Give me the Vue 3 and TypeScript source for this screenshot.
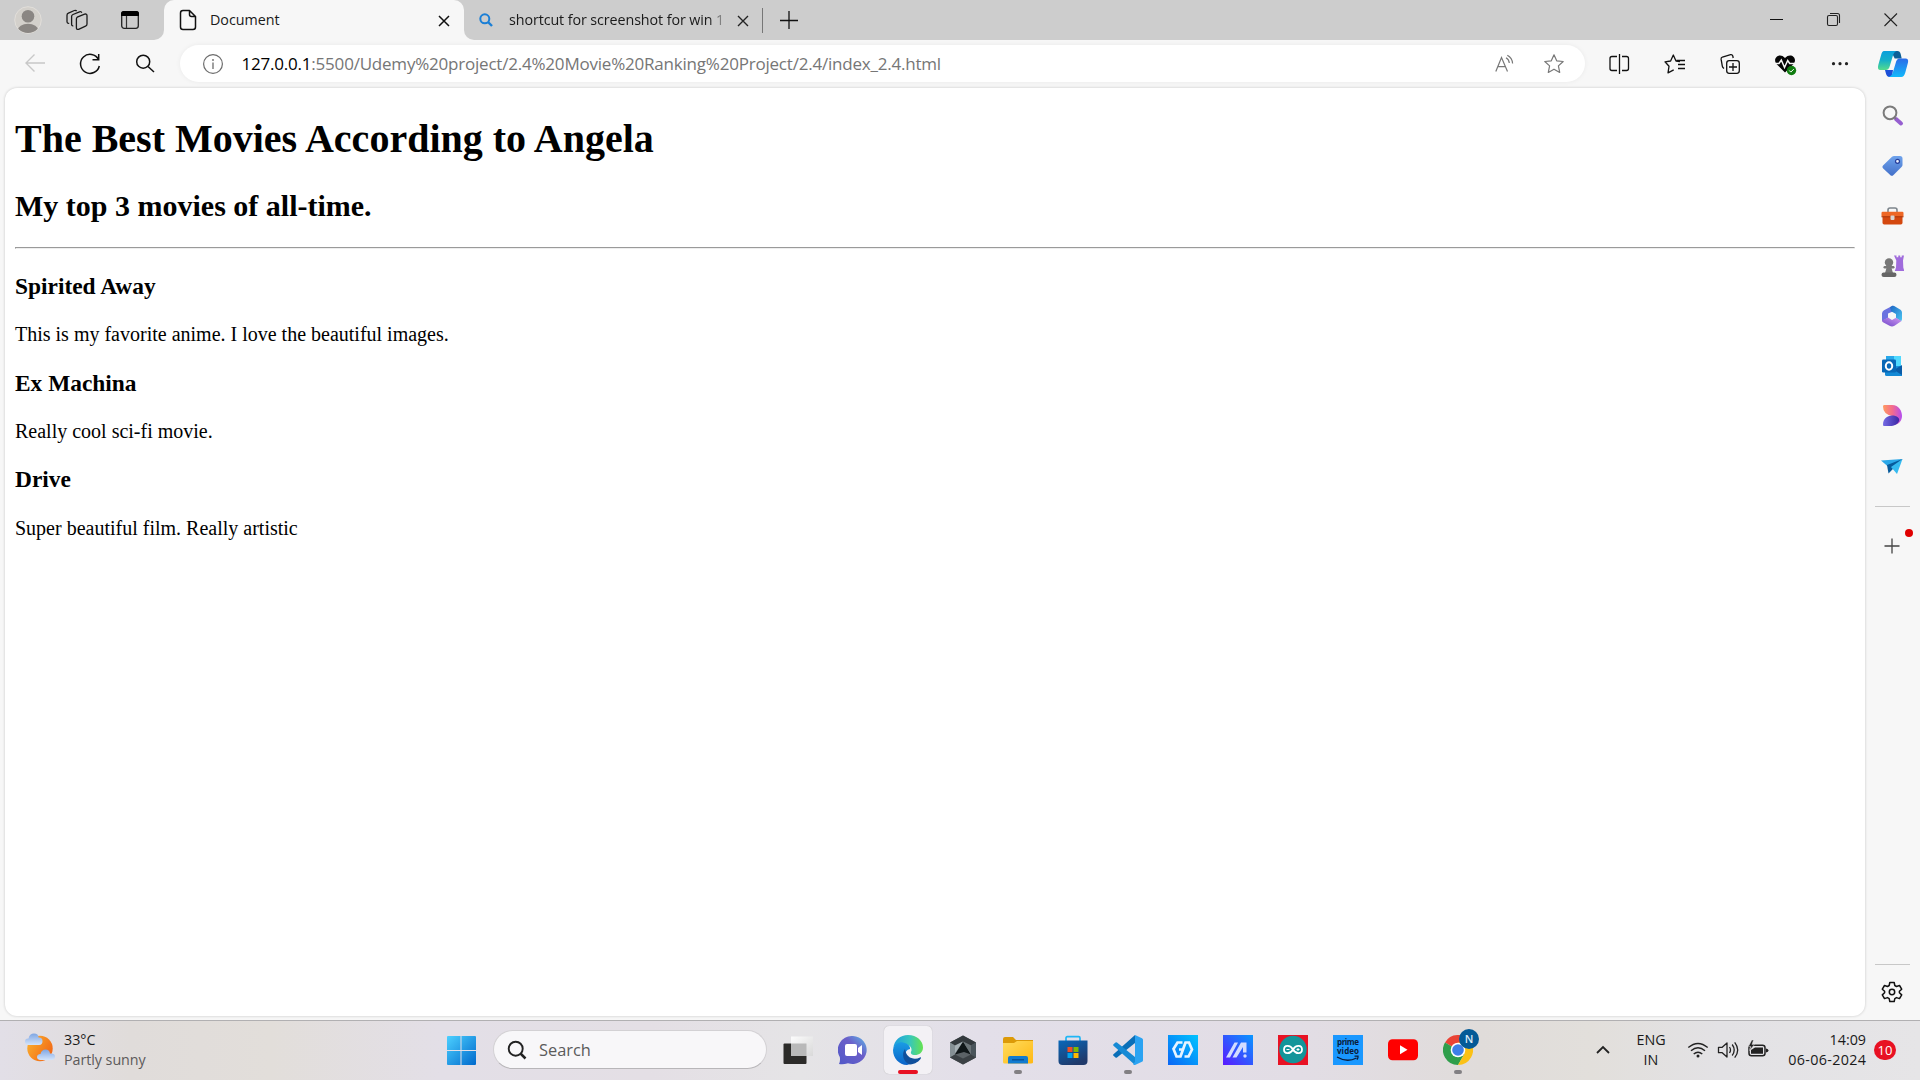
<script setup lang="ts">
interface Movie {
  title: string
  review: string
}

const movies: Movie[] = [
  { title: 'Spirited Away', review: 'This is my favorite anime. I love the beautiful images.' },
  { title: 'Ex Machina', review: 'Really cool sci-fi movie.' },
  { title: 'Drive', review: 'Super beautiful film. Really artistic' },
]
</script>

<template>
  <div class="desktop">
    <header class="tabstrip">
      <div class="strip-left">
        <svg class="ic-avatar" width="28" height="28" viewBox="0 0 28 28">
          <defs><clipPath id="av"><circle cx="14" cy="14" r="13" /></clipPath></defs>
          <circle cx="14" cy="14" r="13.3" fill="#d3d0cb" stroke="#e3e0db" stroke-width=".9" />
          <g clip-path="url(#av)" fill="#8a8683"><circle cx="14" cy="10.3" r="6.3" /><ellipse cx="14" cy="24.3" rx="10.3" ry="6.6" /></g>
        </svg>
        <svg class="ic-spaces" width="24" height="24" viewBox="0 0 24 24" fill="none" stroke="#1b1b1b" stroke-width="1.3" stroke-linejoin="round">
          <path d="M12.2 9.2 19.6 6.2q2.4-.8 2.4 1.6v8.2q0 1.500-1.500 2.200L13.600 21.300q-2.200.700-2.200-1.500v-8.800q0-1.200.8-1.800z" />
          <path d="M8.300 17.800q-1.700.3-1.700-1.600V8.600q0-1.500 1.400-2.100l6.500-2.700q1.800-.6 2.300.9" />
          <path d="M4.200 15.300q-2.200.2-2.200-1.700V7.200q0-1.500 1.400-2.100l6-2.600q1.600-.5 2.200.6" />
        </svg>
        <svg class="ic-vtabs" width="20" height="20" viewBox="0 0 20 20">
          <rect x="1.7" y="1.700" width="16.600" height="16.600" rx="2.500" fill="none" stroke="#222" stroke-width="1.300" />
          <path d="M1 6V3.500Q1 1 3.500 1h13Q19 1 19 3.500V6z" fill="#000" /><path d="M6.500 6v12" stroke="#333" stroke-width="1.200" />
        </svg>
      </div>
      <div class="tab-back">
        <div class="tab active">
          <svg class="ic-doc" width="18" height="22" viewBox="0 0 18 22" fill="none" stroke="#111" stroke-width="1.500" stroke-linejoin="round">
            <path d="M10.500 1.500H4Q1.500 1.500 1.500 4v14Q1.500 20.500 4 20.500h10q2.500 0 2.500-2.500V7.500zM10.500 1.500V5.500q0 2 2 2h4" />
          </svg>
          <span class="tab-name">Document</span>
          <svg class="x" width="12" height="12" viewBox="0 0 12 12"><path d="m1 1 10 10M11 1 1 11" stroke="#111" stroke-width="1.500" /></svg>
        </div>
      </div>
      <div class="strip-right">
        <svg class="ic-find" width="14" height="14" viewBox="0 0 14 14" fill="none" stroke="#1b7fd6" stroke-width="2"><circle cx="5.800" cy="5.800" r="4.500" /><path d="m9 9 4 4" stroke-width="2.400" /></svg>
        <span class="tab-name second">shortcut for screenshot for win 11</span>
        <svg class="x2" width="12" height="12" viewBox="0 0 12 12"><path d="m1 1 10 10M11 1 1 11" stroke="#222" stroke-width="1.400" /></svg>
        <i class="divider"></i>
        <svg class="newtab" width="18" height="18" viewBox="0 0 18 18"><path d="M9 0v18M0 9.500h18" stroke="#111" stroke-width="1.300" /></svg>
        <div class="controls">
          <svg width="57" height="40" viewBox="0 0 57 40"><path d="M22 19.500h13" stroke="#111" /></svg>
          <svg width="57" height="40" viewBox="0 0 57 40" fill="none" stroke="#222" stroke-width="1.100"><rect x="22.500" y="15.500" width="10" height="10" rx="1.500" /><path d="M25 13.500h7.500q2 0 2 2V23" /></svg>
          <svg width="58" height="40" viewBox="0 0 58 40"><path d="m22.500 13.500 12.500 12.500M35 13.500 22.500 26" stroke="#222" stroke-width="1.100" /></svg>
        </div>
      </div>
    </header>

    <div class="toolbar">
      <svg width="55" height="48" viewBox="7 40 55 48" fill="none" stroke="#c8c8c8" stroke-width="1.400"><path d="M45 63H26M34.500 54.500 26 63l8.500 8.500" /></svg>
      <svg width="55" height="48" viewBox="62 40 55 48" fill="none" stroke="#111" stroke-width="1.500"><path d="M98.500 59.500A9.500 9.500 0 1 0 99.300 66M98.700 54v5.700H92.500" /></svg>
      <svg width="56" height="48" viewBox="117 40 56 48" fill="none" stroke="#111" stroke-width="1.500"><circle cx="143.200" cy="61.700" r="6.500" /><path d="m148 66.500 6 5.500" /></svg>
      <div class="address">
        <svg class="ic-info" width="22" height="22" viewBox="0 0 22 22"><circle cx="11" cy="11" r="9.400" fill="none" stroke="#6c6c6c" stroke-width="1.200" /><path d="M11 9.500v6.500" stroke="#6c6c6c" stroke-width="1.300" /><circle cx="11" cy="7" r=".9" fill="#6c6c6c" /></svg>
        <span class="url"><b>127.0.0.1</b>:5500/Udemy%20project/2.4%20Movie%20Ranking%20Project/2.4/index_2.4.html</span>
        <svg class="ic-read" width="20" height="20" viewBox="0 0 20 20" fill="none" stroke="#777" stroke-width="1.200"><path d="m.8 17.500L6.500 3.500l6 14M3 12.700h7.400M11 3.700q3 1.600 3.300 5.300M12.300 1.200q5 2.600 5.300 8.300" /></svg>
        <svg class="ic-star" width="22" height="22" viewBox="0 0 22 22" fill="none" stroke="#777" stroke-width="1.200" stroke-linejoin="round"><path d="m11 1.800 2.700 6 6.500.7-4.800 4.400 1.300 6.500-5.700-3.200-5.700 3.200 1.300-6.500-4.800-4.400 6.500-.7z" /></svg>
      </div>
      <div class="actions">
        <svg viewBox="1592 40 55 48" fill="none" stroke="#111" stroke-width="1.300"><path d="M1617 56.500h-5q-2 0-2 2v10q0 2 2 2h5M1622 56.500h4.500q2 0 2 2v10q0 2-2 2h-4.500M1619.500 54v20" /></svg>
        <svg viewBox="1647 40 55 48" fill="none" stroke="#111" stroke-width="1.300" stroke-linejoin="round"><path d="M1680 61.500l-4-.5-2.700-6-2.700 6-5.600.8 4 4.500-1 6.500 5.700-3M1676.500 60.500h8.500M1678 64.500h7M1678 68.500h7" /></svg>
        <svg viewBox="1702 40 55 48" fill="none" stroke="#111" stroke-width="1.300"><rect x="1726.700" y="60.700" width="12.600" height="12.600" rx="2.500" /><path d="M1733 63v8M1729 67h8M1724 68.500q-1.500-1-1.700-2.300l-1.200-7q-.2-1.700 1.300-2.200l8.200-2.300q1.700-.3 2.200 1.300l.4 2" /></svg>
        <svg viewBox="1757 40 55 48"><path d="M1785 72.500l-8.300-8.300c-5-6 3-12.500 8.300-6.200 5.500-6.300 13.500.2 8.300 6.200z" fill="#050505" /><path d="M1775 63.500h4l2.300-3.500 3.200 7.500 3.200-7 2 3h5.500" fill="none" stroke="#f7f7f7" stroke-width="1.500" /><circle cx="1791.500" cy="70.500" r="4.700" fill="#107c10" /><path d="m1789.300 70.500 1.500 1.600 3-3" fill="none" stroke="#fff" stroke-width="1" /></svg>
        <svg viewBox="1812 40 55 48"><g fill="#222"><circle cx="1833.500" cy="63.700" r="1.600" /><circle cx="1840" cy="63.700" r="1.600" /><circle cx="1846.500" cy="63.700" r="1.600" /></g></svg>
        <svg class="wide" viewBox="1867 40 53 48">
          <defs>
            <linearGradient id="c1" x1="0" y1="0" x2="0" y2="1"><stop offset="0" stop-color="#0a9fdc" /><stop offset=".5" stop-color="#16b0c8" /><stop offset="1" stop-color="#55dc8c" /></linearGradient>
            <linearGradient id="c2" x1="0" y1="0" x2="0" y2="1"><stop offset="0" stop-color="#2a6be8" /><stop offset="1" stop-color="#12b9fb" /></linearGradient>
          </defs>
          <path d="M1891 51h6.500q2.500 0 3.200 3l1 4.500h-7z" fill="#0c5f97" />
          <path d="M1885 70h8l-1 7h-2.500q-2.800 0-3.700-4z" fill="#1c4fd8" />
          <path d="M1884 51h12.500q-2.700 1-3.700 5l-3 10q-1 4-4 4h-5.500q-3.300 0-2-5l2.800-10q1-4 2.900-4z" fill="url(#c1)" />
          <path d="M1899.500 58.500h6q3.300 0 2.500 4l-2.700 10q-1.300 4.500-4 4.500h-12.800q3.500-1 4.500-5l2.700-9q1-4.500 3.800-4.500z" fill="url(#c2)" />
        </svg>
      </div>
    </div>

    <div class="middle">
      <main class="page">
        <h1>The Best Movies According to Angela</h1>
        <h2>My top 3 movies of all-time.</h2>
        <hr>
        <template v-for="m in movies" :key="m.title">
          <h3>{{ m.title }}</h3>
          <p>{{ m.review }}</p>
        </template>
      </main>

      <aside class="sidebar">
        <svg viewBox="0 0 24 24"><circle cx="10" cy="8.800" r="6.400" fill="none" stroke="#7b7b7b" stroke-width="2" /><path d="m16 15 5 4.500" stroke="#965fd0" stroke-width="4" stroke-linecap="round" /><path d="m14 13 2 2" stroke="#777" stroke-width="1.500" /></svg>
        <svg viewBox="0 0 24 24"><defs><linearGradient id="tg" x2="0" y2="1"><stop stop-color="#6fa3ec" /><stop offset="1" stop-color="#4370c9" /></linearGradient></defs><path d="M14 2h6q2.500 0 2.500 2.500V11q0 1-1 2l-8 8q-1.700 1.700-3.300 0l-7-6.500Q1.500 13 3 11.500l9-8.700Q13 2 14 2z" fill="url(#tg)" /><circle cx="17.500" cy="7.300" r="2" fill="#e8f0ff" stroke="#273f9b" stroke-width="1.200" /></svg>
        <svg viewBox="0 -1.500 24 24"><path d="M8 7V4.500q0-2 2-2h5q2 0 2 2V7" fill="none" stroke="#7d858c" stroke-width="1.600" /><rect x="2.500" y="7" width="20" height="12" rx="1.700" fill="#d4480f" /><path d="M1.500 7.500q0-1.200 1.200-1.200h19.600q1.200 0 1.200 1.200V11h-22z" fill="#ee6725" /><path d="M1.500 11.300h22" stroke="#a8360c" /><rect x="10.500" y="10" width="4" height="4.500" rx="1" fill="#d9d5d2" /></svg>
        <svg viewBox="0 0 24 24"><path d="M14 1.500h2.500v1.800h1.800V1.500h1.900v1.800h1.500V1.500H24l-1 5 .3 7 1 3.500h-9.500l1.200-3.500.3-7z" fill="#a06cdc" /><g fill="#777"><circle cx="9" cy="8.500" r="4.200" /><rect x="3.500" y="12" width="11" height="2.500" rx="1.200" /><path d="M6.500 14h5l1.500 5H5z" /><rect x="1.500" y="18.500" width="15" height="4.500" rx="2.200" fill="#666" /></g></svg>
        <svg viewBox="0 0 24 24">
          <defs><linearGradient id="mm" x1="0" y1="1" x2="1" y2="0"><stop stop-color="#6f47c9" /><stop offset="1" stop-color="#d29af2" /></linearGradient><linearGradient id="mn" x2="1" y2="1"><stop stop-color="#1c66c4" /><stop offset="1" stop-color="#4cc6f2" /></linearGradient></defs>
          <path d="M13 1.500 4 6.300Q2 7.500 2 9.500v7.700l6-3.400V9.500l6-2.500z" fill="#6a72e0" />
          <path d="M10 3.200 12 2q1-.6 2.200 0l6.300 3.700Q22 6.600 22 8.500v6.500q0 1.500-1 2.200l-5-3.300V10l-5-2.800z" fill="url(#mn)" />
          <path d="m2 16.500 6-3 4 2.500 4-2.200 5.500 3.200-7 4.700q-2.500 1.500-5 0L3 18.200Q2 17.500 2 16.500z" fill="url(#mm)" />
        </svg>
        <svg viewBox="0 0 24 24"><path d="M6 2h15v16H6z" fill="#28a8ea" /><path d="M14 2h7v10h-7z" fill="#50d9ff" /><path d="M5 13 22 12v10H6.500Q5 22 5 20.500z" fill="#1489d5" /><path d="m14 16 8-5v10z" fill="#0a5ca8" /><rect x="2" y="5.500" width="14" height="13" rx="1.200" fill="#0868b7" /><ellipse cx="9" cy="12" rx="3.200" ry="3.700" fill="none" stroke="#fff" stroke-width="2" /></svg>
        <svg viewBox="0 0 24 24"><defs><linearGradient id="d1"><stop stop-color="#ff9b60" /><stop offset=".5" stop-color="#f36b8d" /><stop offset="1" stop-color="#b44cf0" /></linearGradient><linearGradient id="d2" x2="1" y2="0"><stop stop-color="#746ae4" /><stop offset="1" stop-color="#3b27a4" /></linearGradient></defs><path d="M4 1h8c7 0 10 6 10 11s-4 8.500-7 8.500L12 12Q3 10 3 2.500 3 1 4 1z" fill="url(#d1)" /><path d="M4 22q-1 0-1-1.500C3 15 7 11.500 12 11.500s8 2.500 7 5.500-5 5-9 5z" fill="url(#d2)" /></svg>
        <svg viewBox="0 0 24 24"><path d="M1 6.500 22.500 5l-14 8z" fill="#2aa7e8" /><path d="m7 11 15.500-6-14 14.500z" fill="#075a9b" /><path d="M11 13 22.500 5 17 20z" fill="#35baf0" /></svg>
        <i class="rule"></i>
        <div class="add"><svg viewBox="0 0 24 24"><path d="M12 4.500v15M4.500 12h15" stroke="#444" stroke-width="1.300" /></svg><span class="dot"></span></div>
        <i class="rule bottom"></i>
        <svg class="gear" viewBox="0 0 24 24" fill="none" stroke="#111" stroke-width="1.500" stroke-linejoin="round"><circle cx="12" cy="12" r="2.700" /><path d="m9.800 2.500 4.400 0 .6 3 1.700 1 3-1 2.200 3.700-2.300 2.100v1.500l2.300 2.100-2.200 3.700-3-1-1.700 1-.6 3H9.800l-.6-3-1.700-1-3 1-2.200-3.700 2.300-2.100v-1.500L2.300 9.200l2.200-3.700 3 1 1.700-1z" /></svg>
      </aside>
    </div>

    <footer class="taskbar">
      <div class="weather">
        <svg width="32" height="32" viewBox="0 0 32 32">
          <defs><linearGradient id="sun" x2="1" y2=".6"><stop stop-color="#fbb530" /><stop offset="1" stop-color="#f26a17" /></linearGradient><linearGradient id="cl" x2="0" y2="1"><stop stop-color="#7fa6e3" /><stop offset="1" stop-color="#d3e4fb" /></linearGradient></defs>
          <circle cx="16" cy="16.500" r="12.700" fill="url(#sun)" />
          <path d="M4.500 13q-3.500-.3-3.500-3.500T4.500 6.500Q5.500 1.500 10 1.500T14.500 5.500q4-.3 4 3.700 0 3.500-3.500 3.800z" fill="url(#cl)" />
          <path d="M16.500 28q-3.500-.3-3.500-3t3.500-3Q17.500 17.500 21.500 17.500t4.500 4q5-.3 5 3T27.500 28z" fill="url(#cl)" />
        </svg>
        <div class="lines"><span class="temp">33°C</span><span class="cond">Partly sunny</span></div>
      </div>

      <div class="pins">
        <svg class="start" width="30" height="30" viewBox="0 0 30 30"><defs><linearGradient id="w" x2="1" y2="1"><stop stop-color="#4cd0ff" /><stop offset="1" stop-color="#0069cc" /></linearGradient></defs><path d="M1 2q0-1 1-1h12.500v14H1zM15.500 1h13.500q1 0 1 1v13H15.500zM1 16h13.500v14H2q-1 0-1-1zM15.500 16h14.500v13q0 1-1 1H15.500z" fill="url(#w)" /></svg>
        <div class="search">
          <svg width="20" height="20" viewBox="0 0 20 20" fill="none" stroke="#222" stroke-width="1.900"><circle cx="8.700" cy="8.700" r="7" /><path d="m13.500 13.500 5 5" stroke-width="2.500" /></svg>
          <span>Search</span>
        </div>
        <div class="apps">
          <div class="app"><svg viewBox="0 0 30 30"><defs><linearGradient id="tv" x2="1" y2="1"><stop stop-color="#fcfcfc" /><stop offset="1" stop-color="#d9d9d9" /></linearGradient></defs><rect x=".5" y="8.500" width="23" height="20.500" rx="1" fill="#2c2b29" /><path d="M8 1.500h22V21H8z" fill="url(#tv)" /><path d="M8 8.500h15.500V21H8z" fill="#b9b9b9" /></svg></div>
          <div class="app"><svg viewBox="0 0 30 30"><defs><linearGradient id="ch" x1="0" y1="1" x2="1" y2="0"><stop stop-color="#5058c8" /><stop offset=".6" stop-color="#6b5fc9" /><stop offset="1" stop-color="#5db9e8" /></linearGradient></defs><path d="M15 1a14 14 0 1 1-5 27.200Q5 30 1 29q1.500-3 .8-7A14 14 0 0 1 15 1z" fill="url(#ch)" /><rect x="7" y="9" width="12" height="12" rx="2" fill="#fff" /><path d="M20 13l4-3v10l-4-3z" fill="#fff" /></svg></div>
          <div class="app current">
            <svg viewBox="0 0 30 30"><defs><linearGradient id="e1"><stop stop-color="#1c9de0" /><stop offset=".55" stop-color="#36c6bd" /><stop offset="1" stop-color="#66e34f" /></linearGradient><linearGradient id="e2" x2="0" y2="1"><stop stop-color="#1a9ce4" /><stop offset="1" stop-color="#0b63c9" /></linearGradient></defs>
              <path d="M15 0c9 0 15 6 15 12.500 0 5-4 7.500-8 7.500-3.500 0-4.500-1.500-4-3 1.200-2 .5-5-2-6.500C10 7 2 9 .3 13.500 1 5 7.500 0 15 0z" fill="url(#e1)" />
              <path d="M0 15C1 9 6 6.800 10 7.500c5 .7 7.500 4 7 6.500-7 1-6 11 3 12.500Q17 30 14 30C6 30 0 23 0 15z" fill="url(#e2)" />
              <path d="M12 14c-4 5-1.500 13.500 5 15.500 5-.3 9.500-3.200 11-6.500q.2-1-1-.5c-6 3-14 .5-15-8.500z" fill="#10509c" />
            </svg><i class="mark red"></i>
          </div>
          <div class="app"><svg viewBox="0 0 30 30"><path d="m15 .500 13 7v15l-13 7-13-7v-15z" fill="#5b6266" /><path d="m15 .500 13 7-5 3-8-4-8 4-5-3z" fill="#33393d" /><path d="m2 7.500 5 3v9l-5 3z" fill="#859095" /><path d="m28 7.500-5 3v9l5 3z" fill="#4a555b" /><path d="m7 19.500 8 4 8-4 5 3-13 7-13-7z" fill="#3b4145" /><path d="m15 6.500 8 13-7-2.500-9 2.500z" fill="#101719" /><path d="m7 10.500 8-4-8 12z" fill="#a5afb4" /><path d="m15 6.500 8 4v9z" fill="#6b7478" /></svg></div>
          <div class="app"><svg viewBox="0 0 30 30"><defs><linearGradient id="fo" x2="1" y2="1"><stop stop-color="#ffdc5e" /><stop offset="1" stop-color="#ffb813" /></linearGradient></defs><path d="M0 4q0-2 2-2h8l3 3h17v6H0z" fill="#dc9a08" /><path d="M0 8h11l3-2h16v21.500Q30 28.500 28 28.500H1.500Q0 28.500 0 27z" fill="url(#fo)" /><path d="M5 28.500V23q0-2 2-2h16q2 0 2 2v5.500z" fill="#127bd0" /><path d="M9 24.800h12" stroke="#0a4d91" stroke-width="1.300" /></svg><i class="mark"></i></div>
          <div class="app"><svg viewBox="0 0 30 30"><defs><linearGradient id="st" x2=".5" y2="1"><stop stop-color="#0868ba" /><stop offset="1" stop-color="#203a6b" /></linearGradient></defs><path d="M8 6V3q0-1.300 1.300-1.300h11.400Q22 1.700 22 3v3" fill="none" stroke="#20b6f5" stroke-width="1.700" /><path d="M.5 5.500h29V26q0 4-4 4h-21q-4 0-4-4z" fill="url(#st)" /><path d="M9.500 12h5v5h-5z" fill="#f25022" /><path d="M15.500 12h5v5h-5z" fill="#7fba00" /><path d="M9.500 18h5v5h-5z" fill="#00a4ef" /><path d="M15.500 18h5v5h-5z" fill="#ffb900" /></svg></div>
          <div class="app"><svg viewBox="0 0 30 30"><path d="M22 0v8L4 22.500q-.8.600-1.500 0L.5 20.700q-.8-.8 0-1.500z" fill="#0a6fb8" /><path d="M22 30v-8L4 7.500q-.8-.6-1.500 0L.5 9.300q-.8.800 0 1.500z" fill="#168ad5" /><path d="M22 0l7 3.200q1 .5 1 1.500v20.600q0 1-1 1.500L22 30q-1 .2-2-1l2-2z" fill="#2ba3f2" /></svg><i class="mark"></i></div>
          <div class="app"><svg viewBox="0 0 30 30"><defs><linearGradient id="g1" x1="0" y1="1" x2="1" y2="0"><stop stop-color="#0b66f5" /><stop offset="1" stop-color="#00c4ff" /></linearGradient></defs><path d="M0 0h30v30H0z" fill="url(#g1)" /><path d="M14.500 7.500H9.500L5.500 14l3 7.500h4l2.500-7h-4M16.500 21.500h4l3.500-7L21 7.500h-3.500l-2.500 7" fill="none" stroke="#e7f4ff" stroke-width="2.700" /></svg></div>
          <div class="app"><svg viewBox="0 0 30 30"><defs><linearGradient id="g2" x1="0" y1="1" x2="1" y2="0"><stop stop-color="#5a19ff" /><stop offset="1" stop-color="#0897ff" /></linearGradient></defs><path d="M0 0h30v30H0z" fill="url(#g2)" /><path d="m3 22.500 8.500-15h3.500L7 22.500zM9.500 22.500l8.500-15h5.500v10H20v-5.500l-6.500 10.500z" fill="#d3dcff" /><circle cx="22" cy="21" r="1.700" fill="#d3dcff" /></svg></div>
          <div class="app"><svg viewBox="0 0 30 30"><path d="M0 0h30v30H0z" fill="#e81224" /><circle cx="15" cy="14.500" r="13.700" fill="#12959a" /><path d="M15 14.500c-3-5.300-9-4.500-9 0s6 5.300 9 0 9-4.500 9 0-6 5.300-9 0z" fill="none" stroke="#fff" stroke-width="1.800" /><path d="M8.500 14.500h3M18.500 14.500h3M20 13v3" stroke="#fff" /></svg></div>
          <div class="app"><svg viewBox="0 0 30 30"><path d="M0 0h30v30H0z" fill="#1a98ff" /><text x="15" y="10" class="prime" textLength="22">prime</text><text x="15" y="19" class="prime" textLength="22">video</text><path d="M4 22q10 6 19.500 1M21.500 21.200h3.500q.3 1.800-1 3.500" fill="none" stroke="#0b1c3a" stroke-width="1.300" /></svg></div>
          <div class="app"><svg viewBox="0 0 30 30"><rect y="4.200" width="30" height="21" rx="4.500" fill="#f00" /><path d="m12 10.200 7.500 4.500-7.500 4.500z" fill="#fff" /></svg></div>
          <div class="app">
            <svg viewBox="0 0 30 30"><path d="M15 15 2 7.500A15 15 0 0 1 28 7.500z" fill="#ea4335" /><path d="M15 15 2 7.500A15 15 0 0 0 15 30l6.500-11.200z" fill="#2f9e4b" /><path d="M15 15V7.500h13A15 15 0 0 1 15 30l6.500-11.200z" fill="#fbc116" /><circle cx="15" cy="15" r="7.300" fill="#fff" /><circle cx="15" cy="15" r="5.800" fill="#3d7fe8" /></svg>
            <span class="profile">N</span><i class="mark"></i>
          </div>
        </div>
      </div>

      <div class="tray">
        <svg class="chev" width="14" height="10" viewBox="0 0 14 10"><path d="m1 8 6-6 6 6" fill="none" stroke="#222" stroke-width="1.800" /></svg>
        <div class="lines lang"><span>ENG</span><span>IN</span></div>
        <svg class="stat" viewBox="0 0 22 22" fill="none" stroke="#222" stroke-width="1.400"><path d="M1.300 8.500q9.700-8.200 19.400 0M4 11.800q7-6 14 0M6.700 15q4.300-3.700 8.600 0" /><circle cx="11" cy="17" r="1.500" fill="#222" stroke="none" /></svg>
        <svg class="stat" viewBox="0 0 22 22" fill="none" stroke="#222" stroke-width="1.300" stroke-linejoin="round"><path d="M1.500 8.300h3.700L10 4v14l-4.800-4.300H1.500zM12.500 8q2 3 0 6M15.200 5.500q4 5.500 0 11M17.700 3.300q6 7.700 0 15.400" /></svg>
        <svg class="stat" viewBox="0 0 22 22"><rect x="2" y="6.300" width="16" height="10.500" rx="2.500" fill="none" stroke="#222" stroke-width="1.500" /><path d="M8 8.500h8v6.200H4V11z" fill="#222" /><path d="M19 9.500q2.500.4 2.500 2T19 13.500z" fill="#222" /><path d="M4.800 1 1.500 7.500h2.300L2.500 11.500l5-6H5L6.500 1z" fill="#222" stroke="#e2e1e2" stroke-width=".5" /></svg>
        <div class="lines clock"><span>14:09</span><span class="date">06-06-2024</span></div>
        <span class="badge">10</span>
      </div>
    </footer>
  </div>
</template>

<style>
body { overflow: hidden; }
</style>

<style scoped>
.desktop { width: 1920px; height: 1080px; display: flex; flex-direction: column; background: #f7f7f7; font-family: "Open Sans", "Noto Sans", sans-serif; overflow: hidden; }
svg { display: block; flex: none; }
.tabstrip { height: 40px; display: flex; flex: none; }
.strip-left { width: 164px; box-sizing: border-box; padding-left: 14px; background: #cdcdcd; border-radius: 0 0 10px 0; display: flex; align-items: center; }
.ic-spaces { margin-left: 23px; }
.ic-vtabs { margin-left: 31px; }
.tab-back { width: 300px; background: linear-gradient(#cdcdcd 50%, #f7f7f7 50%); }
.tab { height: 40px; background: #f7f7f7; border-radius: 10px 10px 0 0; display: flex; align-items: center; padding: 0 14px 0 15px; box-sizing: border-box; }
.tab-name { font-size: 14.300px; color: #1a1a1a; margin-left: 13px; line-height: 20px; white-space: nowrap; }
.tab .x { margin-left: auto; margin-top: 1px; }
.strip-right { flex: 1; background: #cdcdcd; border-radius: 0 0 0 10px; display: flex; align-items: center; padding-left: 15px; }
.second { width: 216px; overflow: hidden; margin-left: 16px; letter-spacing: -.09px; -webkit-mask-image: linear-gradient(90deg, #000 200px, transparent 220px); mask-image: linear-gradient(90deg, #000 200px, transparent 220px); }
.x2 { margin: 1px 0 0 12px; }
.divider { width: 1px; height: 25px; background: #777; margin-left: 13px; }
.newtab { margin-left: 17px; }
.controls { margin-left: auto; display: flex; }
.toolbar { height: 48px; flex: none; display: flex; padding-left: 7px; }
.address { width: 1405px; height: 37px; margin-top: 5px; margin-left: 7px; border-radius: 19px; background: #fff; box-shadow: 0 0 5px rgba(0, 0, 0, .06); display: flex; align-items: center; box-sizing: border-box; padding: 0 20px 0 22px; }
.ic-info { margin-left: -.5px; }
.url { margin-left: 18px; font-size: 17px; letter-spacing: -.21px; color: #767676; white-space: nowrap; line-height: 24px; }
.url b { font-weight: 400; color: #000; }
.ic-read { margin-left: auto; }
.ic-star { margin-left: 28px; }
.actions { display: flex; margin-left: 7px; }
.actions svg { width: 55px; height: 48px; }
.actions .wide { width: 53px; }
.middle { flex: 1; display: flex; min-height: 0; }
.page { width: 1860px; height: 928px; margin-left: 5px; box-sizing: border-box; padding: 0 10px; display: flow-root; background: #fff; border-radius: 12px; box-shadow: 0 0 3px rgba(0, 0, 0, .2); font-family: "Liberation Serif", "Times New Roman", serif; font-size: 20px; color: #000; }
.page h1 { font-size: 40px; margin: 26.800px 0; }
.page h2 { font-size: 30px; margin: 24.900px 0; }
.page h3 { font-size: 23.400px; margin: 23.400px 0; }
.page p { margin: 20px 0; }
.page hr { margin: 10px 0; border: 1px solid; border-color: #9a9a9a #eee #eee #9a9a9a; }
.sidebar { width: 54px; box-sizing: border-box; padding-top: 3px; display: flex; flex-direction: column; align-items: center; }
.sidebar svg { width: 24px; height: 24px; margin: 13px 0; }
.rule { width: 35px; height: 1px; background: #c8c8c8; margin-top: 15px; flex: none; }
.add { position: relative; margin-top: 14px; }
.dot { position: absolute; right: -9px; top: 8px; width: 8px; height: 8px; border-radius: 50%; background: #e00000; }
.rule.bottom { margin-top: auto; }
.sidebar .gear { width: 24px; height: 24px; margin: 15px 0 16px; }
.taskbar { height: 60px; box-sizing: border-box; flex: none; border-top: 1px solid #b1b0b2; padding-bottom: 2px; display: flex; align-items: center; background: linear-gradient(90deg, #e2dfe7 0, #e0dcda 130px, #e2deda 270px, #e3dfe7 440px, #e4dfe5 650px, #e5e4e6 800px, #e3dfe9 980px, #e2dde5 1300px, #e0dcda 1480px, #e2dfdb 1590px, #e3e2e5 1720px, #e6e5e7 1920px); }
.lines { display: flex; flex-direction: column; font-size: 14.300px; line-height: 20px; color: #1a1a1a; white-space: nowrap; }
.weather { width: 446px; display: flex; align-items: center; box-sizing: border-box; padding-left: 24px; }
.weather .lines { margin-left: 8px; }
.weather svg { margin-top: -3px; }
.cond { color: #5c5a5a; letter-spacing: -.05px; }
.pins { display: flex; align-items: center; }
.search { width: 274px; height: 39px; box-sizing: border-box; margin-left: 17px; padding-left: 13px; border-radius: 20px; background: #f8f7f9; border: 1px solid #d3d1d4; border-bottom-color: #b8b6b9; display: flex; align-items: center; font-size: 16.400px; color: #5b5b5b; }
.search span { margin-left: 12px; }
.apps { display: flex; margin-left: 3px; }
.app { width: 55px; height: 59px; display: flex; align-items: center; justify-content: center; position: relative; }
.app svg { width: 30px; height: 30px; position: relative; }
.current::before { content: ""; position: absolute; left: 4px; top: 6px; width: 48px; height: 48px; border-radius: 5px; background: #f3f1f5; box-shadow: 0 0 1px #aaa; }
.mark { position: absolute; bottom: 5px; left: 24px; width: 8px; height: 4px; border-radius: 2px; background: #828083; }
.mark.red { width: 20px; left: 18px; background: #e81123; }
.prime { font: 700 8px "Open Sans", sans-serif; fill: #0b1c3a; text-anchor: middle; }
.profile { position: absolute; left: 29px; top: 9px; width: 20px; height: 20px; border-radius: 50%; background: #045a97; color: #d9ecf9; font: 600 11px/20px "Open Sans", sans-serif; text-align: center; }
.tray { margin-left: auto; display: flex; align-items: center; padding-right: 24px; }
.lang { width: 40px; align-items: center; margin-left: 21px; }
.stat { width: 22px; height: 22px; margin-left: 8px; }
.lang + .stat { margin-left: 16px; }
.clock { width: 80px; align-items: flex-end; margin-left: 17px; }
.date { letter-spacing: .35px; margin-right: -.35px; }
.badge { width: 22px; height: 20px; margin-left: 8px; border-radius: 10px; background: #e81123; color: #fff; font-size: 13px; line-height: 20px; text-align: center; }
</style>
